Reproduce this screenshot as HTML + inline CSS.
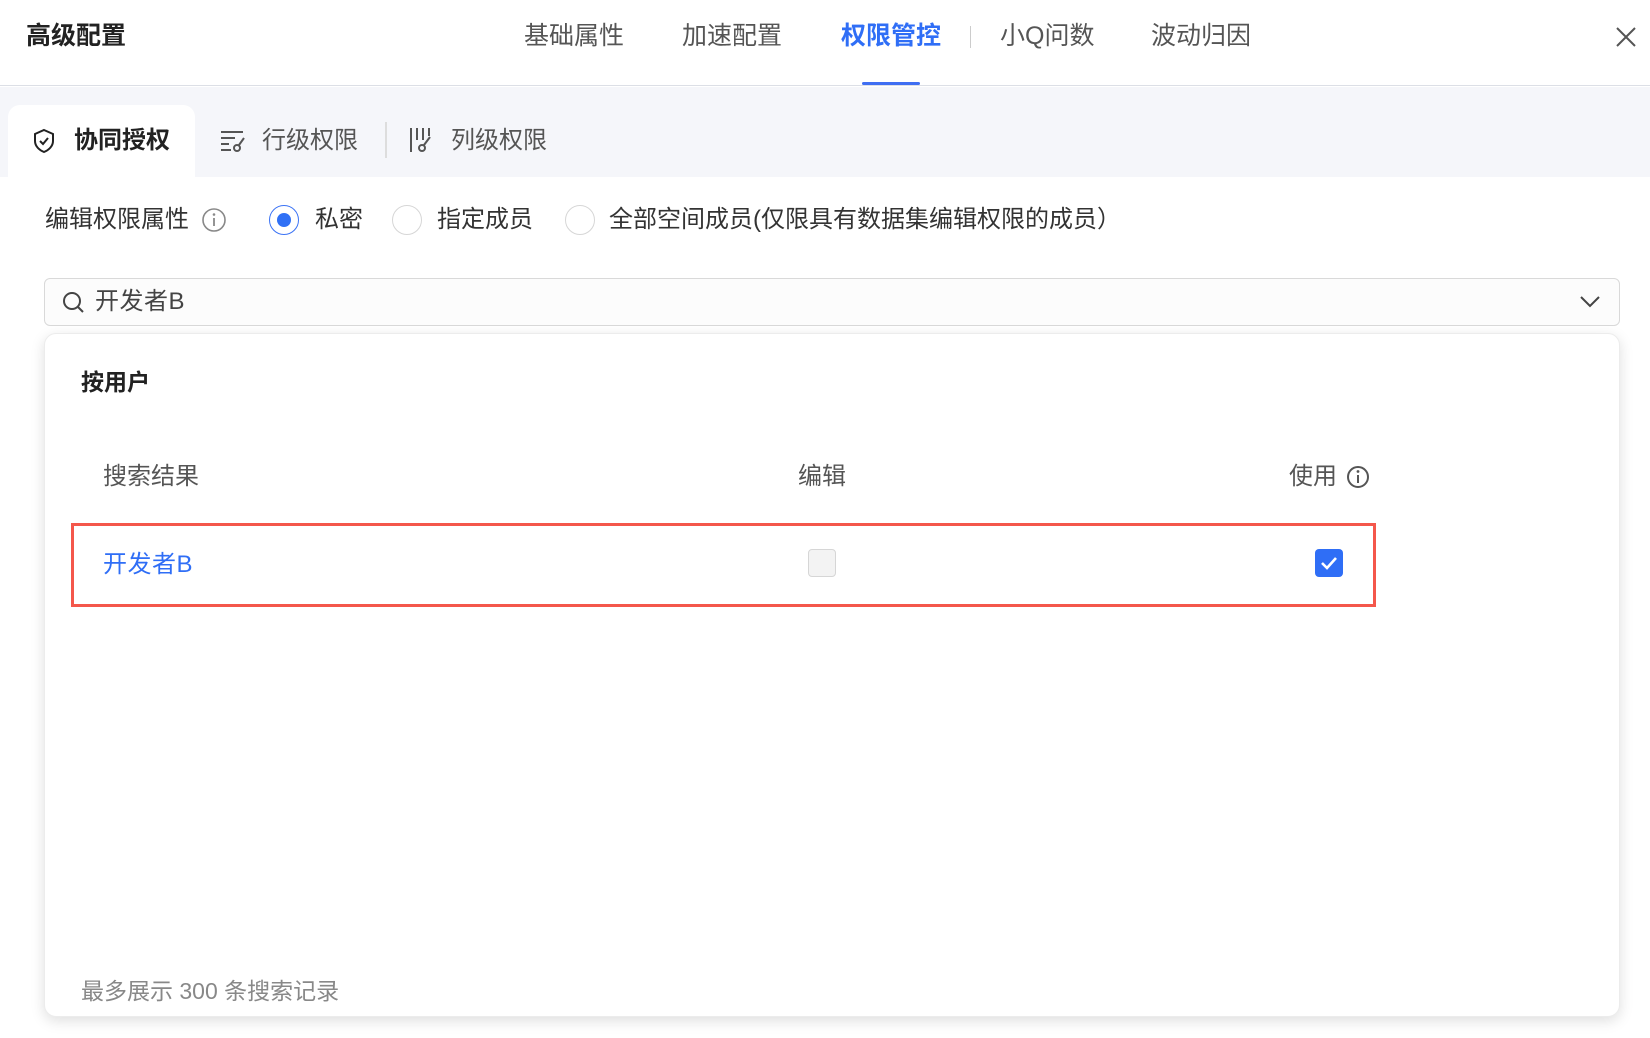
<!DOCTYPE html>
<html><head><meta charset="utf-8"><style>
*{margin:0;padding:0;box-sizing:border-box}
body{width:1650px;height:1038px;overflow:hidden;background:#fff;font-family:"Liberation Sans","Noto Sans CJK SC",sans-serif;color:#333;position:relative}
.a{position:absolute;white-space:nowrap;line-height:1}
.hdr{position:absolute;left:0;top:0;width:1650px;height:86px;border-bottom:1px solid #dcdfe6;background:#fff}
.gray{position:absolute;left:0;top:87px;width:1650px;height:90px;background:#f5f6fa}
.card{position:absolute;left:8px;top:105px;width:187px;height:80px;background:#fff;border-radius:12px 12px 0 0}
.tab{font-size:24px;color:#555}
.radio{position:absolute;width:30px;height:30px;border:1px solid #d6d6d6;border-radius:50%;background:#fff}
.search{position:absolute;left:44px;top:278px;width:1576px;height:48px;border:1px solid #d9d9d9;border-radius:6px;background:#fcfcfc}
.panel{position:absolute;left:44px;top:333px;width:1576px;height:684px;background:#fff;border-radius:12px;box-shadow:0 4px 14px rgba(0,0,0,.13);border:1px solid #ececec}
</style></head><body>
<div class="hdr"></div>
<div class="a" style="left:26px;top:24px;font-size:25px;font-weight:bold;color:#222">高级配置</div>
<div class="a tab" style="left:524px;top:24px;font-size:25px">基础属性</div>
<div class="a tab" style="left:682px;top:24px;font-size:25px">加速配置</div>
<div class="a" style="left:841px;top:24px;font-size:25px;font-weight:bold;color:#2f6ef6">权限管控</div>
<div style="position:absolute;left:862px;top:82px;width:58px;height:3px;background:#3f6ef2;border-radius:2px"></div>
<div style="position:absolute;left:970px;top:26px;width:1px;height:22px;background:#ccc"></div>
<div class="a tab" style="left:1000px;top:24px;font-size:25px">小Q问数</div>
<div class="a tab" style="left:1151px;top:24px;font-size:25px">波动归因</div>
<svg style="position:absolute;left:1615px;top:26px" width="22" height="22"><path d="M2 2L20 20M20 2L2 20" stroke="#555" stroke-width="2"/></svg>

<div class="gray"></div>
<div class="card"></div>
<svg style="position:absolute;left:32px;top:128px" width="24" height="26" viewBox="0 0 24 26"><path d="M12 2L21 6V13C21 18 17 22 12 24C7 22 3 18 3 13V6Z" fill="none" stroke="#222" stroke-width="2"/><path d="M8 13L11 16L16 10" fill="none" stroke="#222" stroke-width="2"/></svg>
<div class="a" style="left:74px;top:129px;font-size:24px;font-weight:bold;color:#222">协同授权</div>
<svg style="position:absolute;left:219px;top:128px" width="28" height="26"><path d="M2 4H24M2 10H16M2 16H10M2 22H12" stroke="#555" stroke-width="2"/><circle cx="18" cy="20" r="3" fill="none" stroke="#555" stroke-width="2"/><path d="M20 17L25 10" stroke="#555" stroke-width="2"/></svg>
<div class="a tab" style="left:262px;top:129px">行级权限</div>
<div style="position:absolute;left:385px;top:122px;width:2px;height:36px;background:#ddd"></div>
<svg style="position:absolute;left:408px;top:126px" width="28" height="28"><path d="M3 2V26M9 2V14M15 2V14M21 2V10" stroke="#555" stroke-width="2"/><circle cx="14" cy="22" r="3" fill="none" stroke="#555" stroke-width="2"/><path d="M16 19L22 11" stroke="#555" stroke-width="2"/></svg>
<div class="a tab" style="left:451px;top:129px">列级权限</div>

<div class="a" style="left:45px;top:208px;font-size:24px;color:#333">编辑权限属性</div>
<svg style="position:absolute;left:201px;top:207px" width="26" height="26"><circle cx="13" cy="13" r="11" fill="none" stroke="#888" stroke-width="1.6"/><path d="M13 11V19" stroke="#888" stroke-width="1.8"/><circle cx="13" cy="7.5" r="1.3" fill="#888"/></svg>
<div class="radio" style="left:269px;top:205px;border-color:#3b73f5"><div style="position:absolute;left:7px;top:7px;width:14px;height:14px;border-radius:50%;background:#3070f5"></div></div>
<div class="a" style="left:315px;top:208px;font-size:24px">私密</div>
<div class="radio" style="left:392px;top:205px"></div>
<div class="a" style="left:437px;top:208px;font-size:24px">指定成员</div>
<div class="radio" style="left:565px;top:205px"></div>
<div class="a" style="left:609px;top:208px;font-size:24px">全部空间成员(仅限具有数据集编辑权限的成员）</div>

<div class="search"></div>
<svg style="position:absolute;left:62px;top:291px" width="24" height="24"><circle cx="10" cy="10" r="8" fill="none" stroke="#444" stroke-width="2"/><path d="M16 16L21 21" stroke="#444" stroke-width="2"/></svg>
<div class="a" style="left:95px;top:290px;font-size:24px;color:#444;letter-spacing:0.5px">开发者B</div>
<svg style="position:absolute;left:1579px;top:295px" width="22" height="14"><path d="M2 2L11 11L20 2" fill="none" stroke="#444" stroke-width="2"/></svg>

<div class="panel"></div>
<div class="a" style="left:81px;top:371px;font-size:23px;font-weight:bold;color:#222">按用户</div>
<div class="a" style="left:103px;top:465px;font-size:24px;color:#555">搜索结果</div>
<div class="a" style="left:798px;top:465px;font-size:24px;color:#555">编辑</div>
<div class="a" style="left:1289px;top:465px;font-size:24px;color:#555">使用</div>
<svg style="position:absolute;left:1346px;top:465px" width="24" height="24"><circle cx="12" cy="12" r="10" fill="none" stroke="#555" stroke-width="2"/><path d="M12 10V18" stroke="#555" stroke-width="2"/><circle cx="12" cy="6.5" r="1.4" fill="#555"/></svg>
<div style="position:absolute;left:71px;top:523px;width:1305px;height:84px;border:3px solid #f4574b"></div>
<div class="a" style="left:103px;top:553px;font-size:24px;color:#2f6ef6;letter-spacing:0.5px">开发者B</div>
<div style="position:absolute;left:808px;top:549px;width:28px;height:28px;border:1px solid #d6d6d6;border-radius:4px;background:#f3f3f3"></div>
<div style="position:absolute;left:1315px;top:549px;width:28px;height:28px;border-radius:4px;background:#2f6ef6"><svg width="28" height="28"><path d="M7 14L12 19L21 9" fill="none" stroke="#fff" stroke-width="2.6"/></svg></div>
<div class="a" style="left:81px;top:980px;font-size:23px;color:#888">最多展示 300 条搜索记录</div>
</body></html>
